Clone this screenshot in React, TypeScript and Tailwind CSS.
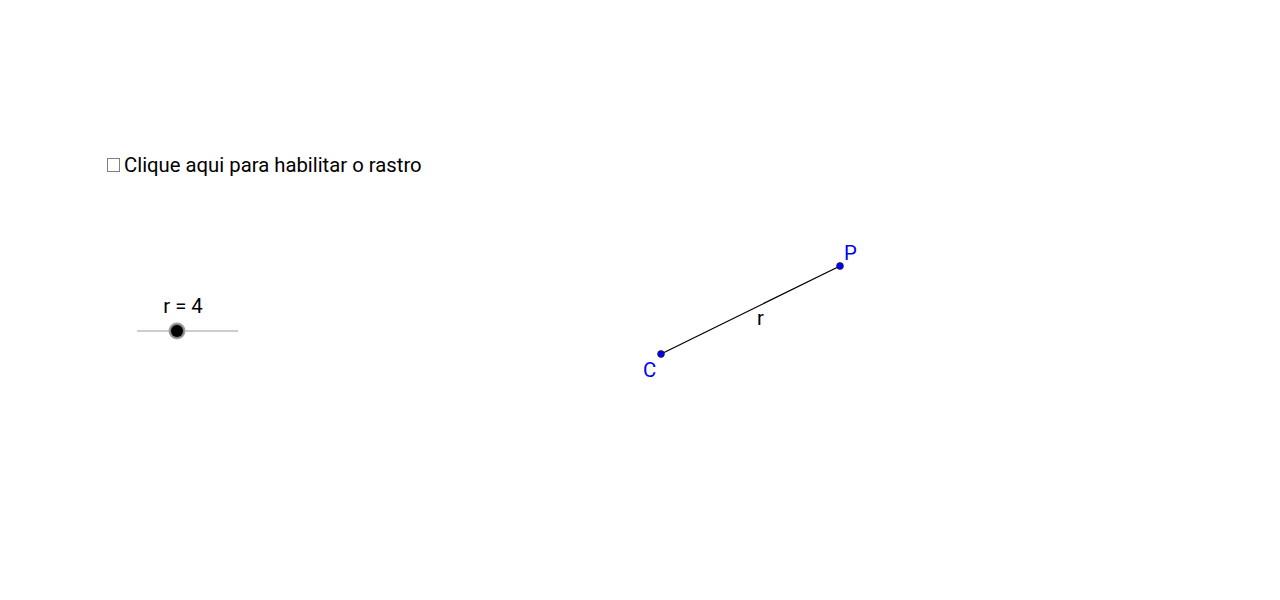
import { useState } from 'react';

const App = () => {
  const [trace, setTrace] = useState(false);

  return (
    <div className="relative w-[1280px] h-[600px] bg-white overflow-hidden font-['Roboto','Noto_Sans',sans-serif]">
      {/* Checkbox */}
      <label className="absolute left-[107px] top-[153px] flex items-center gap-[4px] cursor-pointer select-none">
        <span
          onClick={() => setTrace(!trace)}
          className="w-[13px] h-[14px] border-[1.5px] border-[#808080] bg-white flex items-center justify-center"
        >
          {trace && <span className="w-[7px] h-[8px] bg-[#555]" />}
        </span>
        <span className="text-[20.3px] leading-[24px] text-black">Clique aqui para habilitar o rastro</span>
      </label>

      {/* Geometry canvas */}
      <svg className="absolute left-0 top-0 font-['Roboto','Noto_Sans',sans-serif] text-[20.3px]" width={1280} height={600}>
        {/* Slider */}
        <text x={183} y={313} textAnchor="middle" fill="#000">
          r = 4
        </text>
        <line x1={137} y1={331} x2={238} y2={331} stroke="#9a9a9a" strokeWidth={1} />
        <circle cx={177} cy={331} r={8.5} fill="#a0a0a0" />
        <circle cx={177} cy={331} r={7} fill="#7a7a7a" />
        <circle cx={177} cy={331} r={6} fill="#000" />

        {/* Segment r */}
        <line x1={661} y1={354} x2={840} y2={266} stroke="#000" strokeWidth={1.3} />
        <text x={760.5} y={325} textAnchor="middle" fill="#000">
          r
        </text>

        {/* Points */}
        <circle cx={661} cy={354} r={3.4} fill="#0000ff" stroke="#222" strokeWidth={0.8} />
        <circle cx={840} cy={266} r={3.4} fill="#0000ff" stroke="#222" strokeWidth={0.8} />
        <text x={643} y={377} fill="#0000ff">
          C
        </text>
        <text x={844} y={260} fill="#0000ff">
          P
        </text>
      </svg>
    </div>
  );
};

export default App;
